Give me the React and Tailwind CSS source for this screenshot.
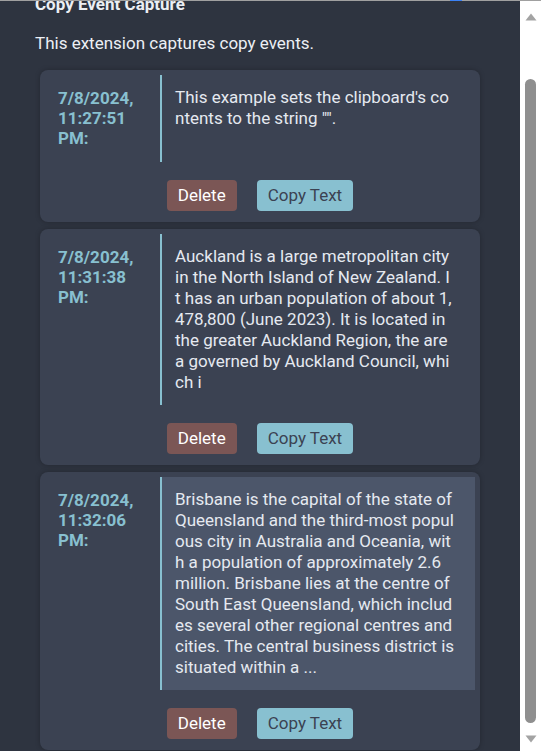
import React, { useLayoutEffect, useRef } from "react";

const entries = [
  {
    ts: "7/8/2024, 11:27:51 PM:",
    lines: ["This example sets the clipboard's co", 'ntents to the string "".'],
    hover: false,
  },
  {
    ts: "7/8/2024, 11:31:38 PM:",
    lines: [
      "Auckland is a large metropolitan city",
      "in the North Island of New Zealand. I",
      "t has an urban population of about 1,",
      "478,800 (June 2023). It is located in",
      "the greater Auckland Region, the are",
      "a governed by Auckland Council, whi",
      "ch i",
    ],
    hover: false,
  },
  {
    ts: "7/8/2024, 11:32:06 PM:",
    lines: [
      "Brisbane is the capital of the state of",
      "Queensland and the third-most popul",
      "ous city in Australia and Oceania, wit",
      "h a population of approximately 2.6",
      "million. Brisbane lies at the centre of",
      "South East Queensland, which includ",
      "es several other regional centres and",
      "cities. The central business district is",
      "situated within a ...",
    ],
    hover: true,
  },
];

function Card({ entry }) {
  return (
    <div className="mx-[5px] mb-[7px] rounded-lg bg-[#3b4252] p-[5px] shadow-[0_0_5px_rgba(0,0,0,0.25)]">
      <div className="flex">
        <div className="w-[115px] shrink-0 pl-[13px] pr-[10px] pt-[13px] pb-[14px] text-[17px] font-bold leading-[20px] text-[#88c0d0]">
          {entry.ts}
        </div>
        <div
          className={
            "flex-1 border-l-2 border-[#88c0d0] pl-[13px] pr-[6px] py-[12px] text-[17px] leading-[21px] text-[#e5e9f0] " +
            (entry.hover ? "bg-[#4c566a]" : "")
          }
        >
          {entry.lines.map((l, i) => (
            <div key={i} className="whitespace-nowrap">
              {l}
            </div>
          ))}
        </div>
      </div>
      <div className="flex justify-center gap-[20px] pt-[18px] pb-[6px]">
        <button className="h-[31px] rounded-[4px] bg-[#7b5655] px-[11px] text-[17px] leading-[31px] text-white">
          Delete
        </button>
        <button className="h-[31px] rounded-[4px] bg-[#88c0d0] px-[11px] text-[17px] leading-[31px] text-[#3b4252]">
          Copy Text
        </button>
      </div>
    </div>
  );
}

export default function App() {
  const ref = useRef(null);
  useLayoutEffect(() => {
    if (ref.current) ref.current.scrollTop = 72;
  }, []);
  return (
    <div className="relative flex h-[751px] w-[541px] overflow-hidden bg-[#2e3440] font-['Roboto',sans-serif]">
      <div
        ref={ref}
        className="h-full flex-1 overflow-y-auto [scrollbar-width:none]"
      >
        <div className="px-[35px] pt-[67px] pb-[15px]">
          <h3 className="text-[17px] font-bold leading-[19px] text-[#eceff4]">
            Copy Event Capture
          </h3>
          <p className="mt-[19px] mb-[17px] text-[17px] leading-[20px] text-[#eceff4]">
            This extension captures copy events.
          </p>
          {entries.map((e, i) => (
            <Card key={i} entry={e} />
          ))}
        </div>
      </div>
      <div className="flex h-full w-[21px] shrink-0 flex-col items-center bg-white">
        <svg className="mt-[13px]" width="12" height="8" viewBox="0 0 12 8">
          <path d="M6 0.5 L11.5 7.5 L0.5 7.5 Z" fill="#a3a3a3" />
        </svg>
        <div className="mt-[58px] h-[644px] w-[11px] rounded-full bg-[#8f8f8f]" />
        <svg className="mt-auto mb-[8px]" width="12" height="8" viewBox="0 0 12 8">
          <path d="M0.5 0.5 L11.5 0.5 L6 7.5 Z" fill="#a3a3a3" />
        </svg>
      </div>
      <div className="absolute left-0 top-0 h-px w-full bg-[#a0a0a0]" />
      <div className="absolute left-[450px] top-0 h-px w-[12px] bg-[#3b82f6]" />
    </div>
  );
}
